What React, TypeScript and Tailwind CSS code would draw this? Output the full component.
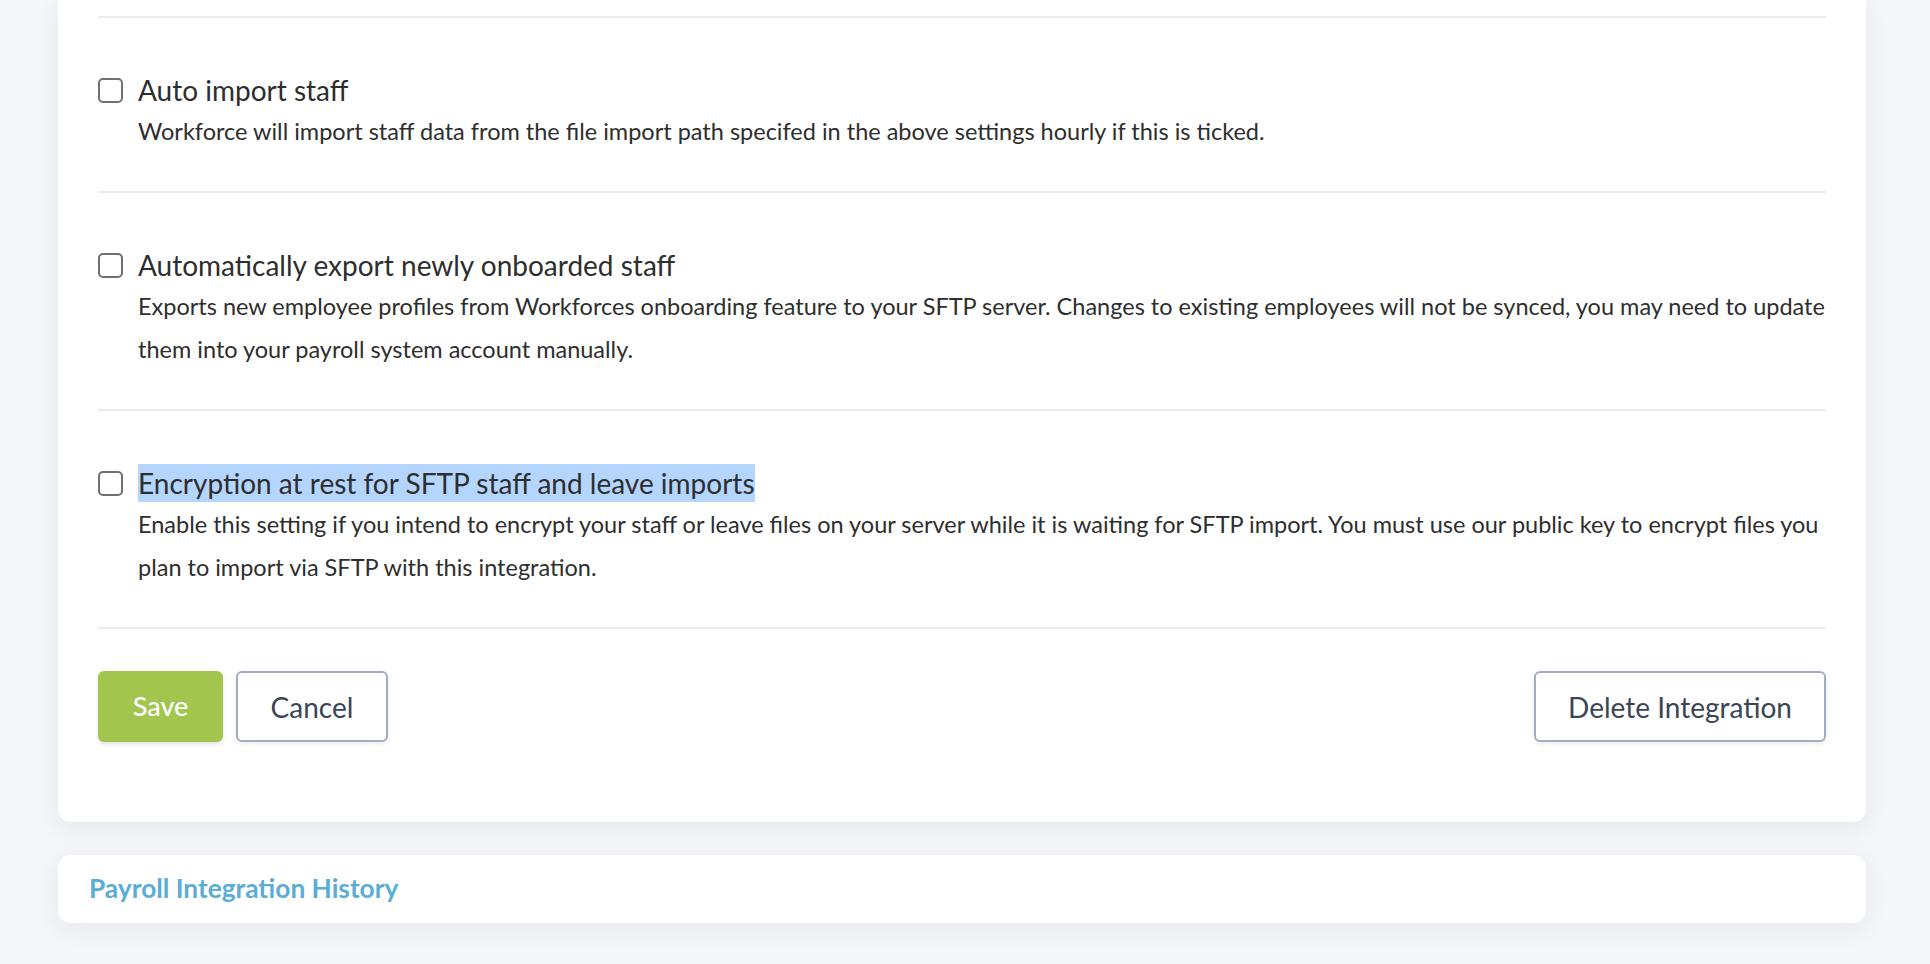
import React from 'react';

type Setting = {
  title: string;
  body: string;
  selected?: boolean;
};

const settings: Setting[] = [
  {
    title: 'Auto import staff',
    body: 'Workforce will import staff data from the file import path specifed in the above settings hourly if this is ticked.',
  },
  {
    title: 'Automatically export newly onboarded staff',
    body: 'Exports new employee profiles from Workforces onboarding feature to your SFTP server. Changes to existing employees will not be synced, you may need to update them into your payroll system account manually.',
  },
  {
    title: 'Encryption at rest for SFTP staff and leave imports',
    body: 'Enable this setting if you intend to encrypt your staff or leave files on your server while it is waiting for SFTP import. You must use our public key to encrypt files you plan to import via SFTP with this integration.',
    selected: true,
  },
];

function SettingRow({ setting }: { setting: Setting }) {
  return (
    <div className="pt-[54px] pb-[38px] border-b-2 border-[#ececec]">
      <div className="flex items-center h-[36px]">
        <span className="w-[25px] h-[25px] shrink-0 rounded-[5px] border-2 border-[#707070] bg-white" />
        <span className="ml-[15px] text-[28px] leading-[36px] text-[#2e2e2e]">
          <span className={setting.selected ? 'bg-[#b4d5fe] py-[2px]' : ''}>{setting.title}</span>
        </span>
      </div>
      <p className="mt-[2px] pl-[40px] text-[23.5px] leading-[43px] text-[#2e2e2e]">{setting.body}</p>
    </div>
  );
}

export default function App() {
  return (
    <div
      className="min-h-screen bg-[#f5f6f9] pl-[58px] pr-[64px] pb-[40px]"
      style={{ fontFamily: 'Lato, "Open Sans", sans-serif' }}
    >
      <div className="bg-white rounded-b-[13px] shadow-[0_6px_24px_rgba(30,40,80,0.07)] px-[40px] pt-[16px] pb-[80px]">
        <div className="border-b-2 border-[#ececec]" />
        {settings.map((s) => (
          <SettingRow key={s.title} setting={s} />
        ))}

        <div className="flex items-center justify-between mt-[42px]">
          <div className="flex items-center gap-[13px]">
            <button className="h-[71px] w-[125px] rounded-[6px] bg-[#a2c54e] text-white text-[27px] font-medium shadow-[0_2px_4px_rgba(0,0,0,0.12)]">
              Save
            </button>
            <button className="h-[71px] w-[152px] rounded-[6px] bg-white border-2 border-[#a3adc0] text-[#3b4556] text-[28px] shadow-[0_2px_4px_rgba(0,0,0,0.08)]">
              Cancel
            </button>
          </div>
          <button className="h-[71px] w-[292px] rounded-[6px] bg-white border-2 border-[#a3adc0] text-[#3b4556] text-[28px] shadow-[0_2px_4px_rgba(0,0,0,0.08)]">
            Delete Integration
          </button>
        </div>
      </div>

      <div className="mt-[33px] bg-white rounded-[13px] shadow-[0_6px_24px_rgba(30,40,80,0.07)] h-[68px] flex items-center pl-[31px]">
        <span className="text-[26.3px] font-bold text-[#5badd6]">Payroll Integration History</span>
      </div>
    </div>
  );
}
